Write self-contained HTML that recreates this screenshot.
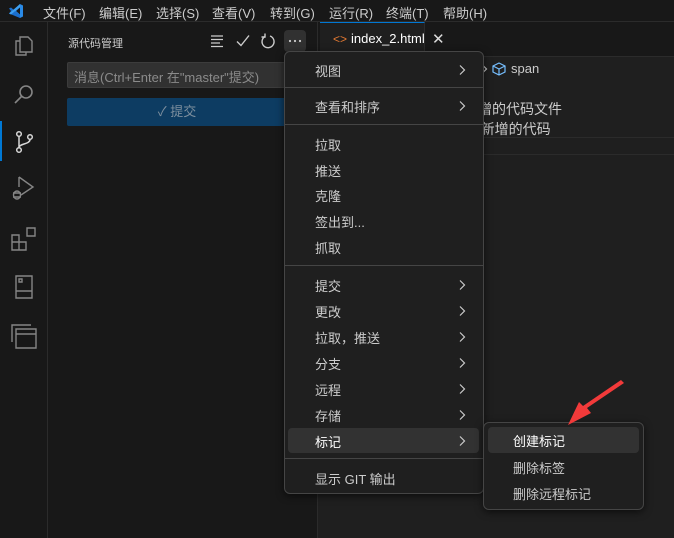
<!DOCTYPE html>
<html><head><meta charset="utf-8"><style>
*{margin:0;padding:0;box-sizing:border-box}
body{width:674px;height:538px;background:#1f1f1f;font-family:"Liberation Sans","Noto Sans CJK SC",sans-serif;color:#ccc;position:relative;overflow:hidden;font-size:13px}
.a{position:absolute}
.title{left:0;top:0;width:674px;height:22px;background:#181818;border-bottom:1px solid #2b2b2b}
.title span{position:absolute;top:3px;font-size:13px;color:#ccc}
.act{left:0;top:22px;width:48px;height:516px;background:#181818;border-right:1px solid #2b2b2b}
.side{left:48px;top:22px;width:270px;height:516px;background:#181818;border-right:1px solid #2b2b2b}
.menu{background:#1f1f1f;border:1px solid #454545;border-radius:6px;box-shadow:0 2px 8px rgba(0,0,0,.6)}
.it{position:absolute;left:30px;font-size:13px;color:#ccc}
.ch{position:absolute;left:172px;width:10px;height:12px}
.sep{position:absolute;left:0;width:198px;height:1px;background:#454545}
</style></head><body>
<svg width="0" height="0" style="position:absolute"><defs><symbol id="chv" viewBox="0 0 10 12"><path d="M3 1.5l4.5 4.5-4.5 4.5" fill="none" stroke="#ccc" stroke-width="1.2"/></symbol></defs></svg>
<div class="a title">
<svg class="a" style="left:8px;top:3px" width="16" height="16" viewBox="0 0 16 16"><path d="M12 1 L5 8 L12 15 L15 13.5 V2.5Z M12 4.5 V11.5 L8 8Z" fill="#2a8ae6"/><path d="M1 5.5 L3 4.5 L12 12 V15 L1 10.5 L3 8Z" fill="#1a6fcf"/><path d="M1 10.5 L3 11.5 L12 4 V1Z" fill="#3ea0f0"/></svg>
<span style="left:43px">文件(F)</span><span style="left:99px">编辑(E)</span><span style="left:156px">选择(S)</span><span style="left:212px">查看(V)</span><span style="left:270px">转到(G)</span><span style="left:329px">运行(R)</span><span style="left:386px">终端(T)</span><span style="left:443px">帮助(H)</span>
</div>
<div class="a act">
<svg class="a" style="left:12px;top:12px" width="24" height="24" viewBox="0 0 24 24" fill="none" stroke="#858585" stroke-width="1.4"><path d="M8 3h8l4 4v11h-12z"/><path d="M8 7H4v14h10v-3"/></svg>
<svg class="a" style="left:12px;top:60px" width="24" height="24" viewBox="0 0 24 24" fill="none" stroke="#858585" stroke-width="1.6"><circle cx="14" cy="10" r="6"/><path d="M10 14L3 21"/></svg>
<div class="a" style="left:0;top:99px;width:2px;height:40px;background:#0078d4"></div>
<svg class="a" style="left:12px;top:108px" width="24" height="24" viewBox="0 0 24 24" fill="none" stroke="#d7d7d7" stroke-width="1.5"><circle cx="7" cy="4" r="2.3"/><circle cx="7" cy="20" r="2.3"/><circle cx="18" cy="7" r="2.3"/><path d="M7 6.5v11M18 9.5c0 5-11 4-11 8"/></svg>
<svg class="a" style="left:10px;top:153px" width="26" height="26" viewBox="0 0 26 26" fill="none" stroke="#858585" stroke-width="1.4"><path d="M9 2v10M9 2l14 10-12 8"/><ellipse cx="7" cy="20" rx="3.5" ry="4"/><path d="M3 18h8M3 22h8"/></svg>
<svg class="a" style="left:11px;top:205px" width="26" height="26" viewBox="0 0 26 26" fill="none" stroke="#858585" stroke-width="1.4"><path d="M1 8h7v15H1zM1 15h14v8H8M16 1h8v8h-8z"/></svg>
<svg class="a" style="left:14px;top:252px" width="20" height="26" viewBox="0 0 20 26" fill="none" stroke="#858585" stroke-width="1.4"><path d="M2 2h16v22H2zM2 17h16M5 5h3v3H5z"/></svg>
<svg class="a" style="left:11px;top:302px" width="26" height="26" viewBox="0 0 26 26" fill="none" stroke="#858585" stroke-width="1.4"><path d="M1 18V1h19M5 22V5h20v19H5zM5 10h20"/></svg>
</div>
<div class="a side">
<div class="a" style="left:20px;top:13px;font-size:11px;color:#ccc">源代码管理</div>
<svg class="a" style="left:162px;top:12px" width="14" height="14" viewBox="0 0 14 14" stroke="#ccc" stroke-width="1.2"><path d="M1 2h12M1 5.5h12M1 9h9M1 12.5h12"/></svg>
<svg class="a" style="left:187px;top:11px" width="16" height="16" viewBox="0 0 16 16" fill="none" stroke="#ccc" stroke-width="1.4"><path d="M2 8.5l4 4 8-10"/></svg>
<svg class="a" style="left:212px;top:11px" width="16" height="16" viewBox="0 0 16 16" fill="none" stroke="#ccc" stroke-width="1.4"><path d="M5 3.5A6 6 0 1 0 10 3"/><path d="M5 0.5v3.5H1.5"/></svg>
<div class="a" style="left:236px;top:8px;width:22px;height:22px;background:#313131;border-radius:4px"></div>
<svg class="a" style="left:236px;top:8px" width="22" height="22" viewBox="0 0 22 22" fill="#ccc"><circle cx="6" cy="11" r="1.1"/><circle cx="11" cy="11" r="1.1"/><circle cx="16" cy="11" r="1.1"/></svg>
<div class="a" style="left:19px;top:40px;width:230px;height:26px;background:#313131;border:1px solid #3c3c3c;border-radius:2px;color:#8b8b8b;font-size:13px;padding:4px 6px">消息(Ctrl+Enter 在"master"提交)</div>
<div class="a" style="left:19px;top:76px;width:220px;height:28px;background:#0d3c62;border-radius:2px;color:#7d8f9e;font-size:13px;text-align:center;line-height:28px">✓ 提交</div>
</div>
<!-- editor -->
<div class="a" style="left:318px;top:22px;width:356px;height:35px;background:#181818;border-bottom:1px solid #2b2b2b"></div>
<div class="a" style="left:320px;top:22px;width:105px;height:36px;background:#1f1f1f;border-top:1px solid #0078d4;border-right:1px solid #2b2b2b"></div>
<div class="a" style="left:333px;top:32px;color:#e37933;font-size:12px">&lt;&gt;</div>
<div class="a" style="left:351px;top:31px;color:#fff;font-size:13px">index_2.html</div>
<div class="a" style="left:432px;top:30px;color:#ddd;font-size:15px">✕</div>
<svg class="a" style="left:479px;top:63px" width="10" height="12"><use href="#chv"/></svg>
<svg class="a" style="left:492px;top:62px" width="14" height="14" viewBox="0 0 14 14" fill="none" stroke="#75beff" stroke-width="1.2"><path d="M7 1l6 3v6l-6 3-6-3V4zM1 4l6 3 6-3M7 7v6"/></svg>
<div class="a" style="left:511px;top:61px;color:#ccc;font-size:13px">span</div>
<div class="a" style="left:478px;top:99px;color:#ccc;font-size:14px">增的代码文件</div>
<div class="a" style="left:476px;top:119px;color:#ccc;font-size:14px">r新增的代码</div>
<div class="a" style="left:483px;top:137px;width:191px;height:1px;background:#2b2b2b"></div>
<div class="a" style="left:483px;top:154px;width:191px;height:1px;background:#2b2b2b"></div>
<!-- menu -->
<div class="a menu" style="left:284px;top:51px;width:200px;height:443px">
<div class="it" style="top:9px">视图</div><svg class="ch" style="top:12px"><use href="#chv"/></svg>
<div class="sep" style="top:35px"></div>
<div class="it" style="top:45px">查看和排序</div><svg class="ch" style="top:48px"><use href="#chv"/></svg>
<div class="sep" style="top:72px"></div>
<div class="it" style="top:83px">拉取</div>
<div class="it" style="top:109px">推送</div>
<div class="it" style="top:134px">克隆</div>
<div class="it" style="top:160px">签出到...</div>
<div class="it" style="top:186px">抓取</div>
<div class="sep" style="top:213px"></div>
<div class="it" style="top:224px">提交</div><svg class="ch" style="top:227px"><use href="#chv"/></svg>
<div class="it" style="top:250px">更改</div><svg class="ch" style="top:253px"><use href="#chv"/></svg>
<div class="it" style="top:276px">拉取，推送</div><svg class="ch" style="top:279px"><use href="#chv"/></svg>
<div class="it" style="top:302px">分支</div><svg class="ch" style="top:305px"><use href="#chv"/></svg>
<div class="it" style="top:328px">远程</div><svg class="ch" style="top:331px"><use href="#chv"/></svg>
<div class="it" style="top:354px">存储</div><svg class="ch" style="top:357px"><use href="#chv"/></svg>
<div class="a" style="left:3px;top:376px;width:191px;height:25px;background:#323232;border-radius:4px"></div>
<div class="it" style="top:380px;color:#fff">标记</div><svg class="ch" style="top:383px"><use href="#chv"/></svg>
<div class="sep" style="top:406px"></div>
<div class="it" style="top:417px">显示 GIT 输出</div>
</div>
<div class="a menu" style="left:483px;top:422px;width:161px;height:88px">
<div class="a" style="left:4px;top:4px;width:151px;height:26px;background:#323232;border-radius:4px"></div>
<div class="it" style="top:8px;left:29px;color:#fff">创建标记</div>
<div class="it" style="top:35px;left:29px">删除标签</div>
<div class="it" style="top:61px;left:29px">删除远程标记</div>
</div>
<svg class="a" style="left:565px;top:380px" width="62" height="50" viewBox="0 0 62 50"><path d="M59 3 L22 28 L26 33 L3 45 L14 22 L18 26 L56 0Z" fill="#f23a3a"/></svg>
</body></html>
